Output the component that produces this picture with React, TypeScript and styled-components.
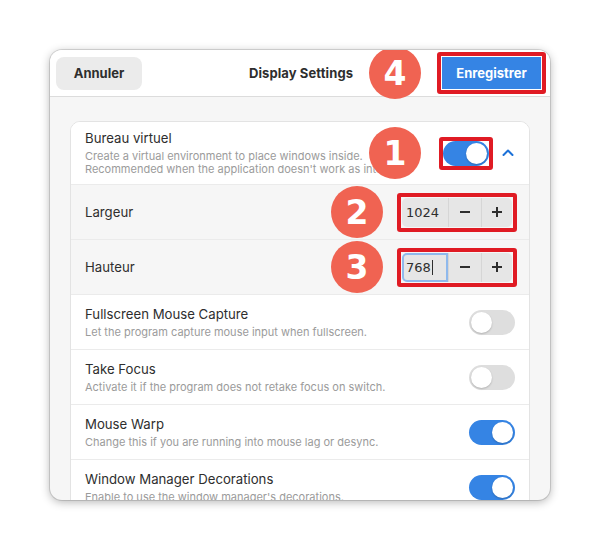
import React from 'react';
import styled, { createGlobalStyle, css } from 'styled-components';

const GlobalStyle = createGlobalStyle`
  html, body {
    margin: 0;
    background: #ffffff;
    font-family: Inter, "Noto Sans", sans-serif;
  }
`;

const Page = styled.div`
  width: 600px;
  height: 550px;
  padding: 50px;
  box-sizing: border-box;
`;

const Window = styled.div`
  width: 500px;
  height: 450px;
  border-radius: 12px;
  overflow: hidden;
  display: flex;
  flex-direction: column;
  background: #f6f6f6;
  box-shadow: 0 0 0 1px rgba(0, 0, 0, 0.12), 0 2px 10px rgba(0, 0, 0, 0.3);
`;

const Header = styled.header`
  height: 46px;
  flex-shrink: 0;
  display: grid;
  grid-template-columns: 1fr auto 1fr;
  align-items: center;
  padding: 0 4px 0 6px;
  background: #ffffff;
  border-bottom: 1px solid #dcdcdc;
`;

const Title = styled.h1`
  margin: 0;
  font-size: 13px;
  font-weight: 700;
  color: #2e2e2e;
  letter-spacing: 0.1px;
`;

const HeaderButton = styled.button<{ $primary?: boolean }>`
  border: none;
  font-family: Inter, sans-serif;
  font-size: 13px;
  font-weight: 700;
  cursor: pointer;
  ${({ $primary }) =>
    $primary
      ? css`
          width: 99px;
          height: 32px;
          background: #3584e4;
          color: #ffffff;
          border-radius: 0;
        `
      : css`
          width: 86px;
          height: 33px;
          background: #ebebeb;
          color: #2e2e2e;
          border-radius: 8px;
        `}
`;

const Start = styled.div`
  justify-self: start;
`;

const End = styled.div`
  justify-self: end;
  display: flex;
`;

const Highlight = styled.div<{ $pad?: number }>`
  position: relative;
  display: inline-flex;
  border: 4px solid #e01b24;
  border-radius: 3px;
  padding: ${({ $pad = 0 }) => $pad}px;
`;

/* gap is measured from the outer edge of the red frame */
const Badge = styled.span<{ $gap: number }>`
  position: absolute;
  right: calc(100% + ${({ $gap }) => $gap + 4}px);
  top: 50%;
  transform: translateY(-50%);
  width: 52px;
  height: 52px;
  border-radius: 50%;
  background: #f06352;
  color: #ffffff;
  display: flex;
  align-items: center;
  justify-content: center;
  font-family: "DejaVu Sans", sans-serif;
  font-weight: 700;
  font-size: 33px;
  pointer-events: none;
`;

const Content = styled.main`
  flex: 1;
  overflow: hidden;
  padding: 24px 20px;
`;

const Card = styled.section`
  background: #ffffff;
  border: 1px solid #e3e3e3;
  border-radius: 10px;
  overflow: hidden;
`;

const Row = styled.div<{ $nested?: boolean; $tall?: boolean }>`
  display: flex;
  align-items: center;
  justify-content: space-between;
  height: ${({ $tall }) => ($tall ? 62 : 54)}px;
  padding: 0 14px;
  border-top: 1px solid #ebebeb;
  background: ${({ $nested }) => ($nested ? '#f6f6f6' : '#ffffff')};

  &:first-child {
    border-top: none;
  }
`;

const SpinRow = styled(Row)`
  padding-right: 12px;
`;

const Texts = styled.div`
  display: flex;
  flex-direction: column;
  gap: 3px;
  min-width: 0;
`;

const RowTitle = styled.div`
  font-size: 13.2px;
  color: #2e2e2e;
  line-height: 17px;
`;

const RowSubtitle = styled.div`
  font-size: 11px;
  color: #9b9b9b;
  line-height: 13px;
  white-space: nowrap;
`;

const Suffix = styled.div`
  display: flex;
  align-items: center;
  gap: 8px;
  flex-shrink: 0;
`;

const Track = styled.div<{ $on: boolean }>`
  position: relative;
  width: 46px;
  height: 25px;
  border-radius: 13px;
  background: ${({ $on }) => ($on ? '#3584e4' : '#dedede')};
  flex-shrink: 0;
`;

const Knob = styled.span<{ $on: boolean }>`
  position: absolute;
  top: 2px;
  left: ${({ $on }) => ($on ? 23 : 2)}px;
  width: 21px;
  height: 21px;
  border-radius: 50%;
  background: #ffffff;
  box-shadow: 0 1px 2px rgba(0, 0, 0, 0.2);
`;

const Spin = styled.div`
  display: flex;
  width: 110px;
  height: 29px;
  background: #e6e6e6;
  border-radius: 5px;
`;

const SpinEntry = styled.div<{ $focused?: boolean }>`
  width: 46px;
  box-sizing: border-box;
  display: flex;
  align-items: center;
  padding-left: 4px;
  font-family: "DejaVu Sans", sans-serif;
  font-size: 13px;
  color: #2e2e2e;
  border-radius: 5px 0 0 5px;
  ${({ $focused }) =>
    $focused &&
    css`
      box-shadow: inset 0 0 0 2px #8fb9ec;
    `}
`;

const Caret = styled.span`
  display: inline-block;
  width: 1px;
  height: 15px;
  margin-left: 1px;
  background: #2e2e2e;
`;

const SpinButton = styled.button<{ $last?: boolean }>`
  width: ${({ $last }) => ($last ? 31 : 33)}px;
  border: none;
  border-left: 1px solid #d6d6d6;
  background: transparent;
  display: flex;
  align-items: center;
  justify-content: center;
  padding: 0;
  color: #2e2e2e;
`;

const Chevron = () => (
  <svg width="14" height="14" viewBox="0 0 14 14" fill="none">
    <path d="M2.5 9 L7 4.5 L11.5 9" stroke="#1c71d8" strokeWidth="2" strokeLinecap="round" strokeLinejoin="round" />
  </svg>
);

const Minus = () => (
  <svg width="12" height="12" viewBox="0 0 12 12">
    <path d="M1 6 H11" stroke="currentColor" strokeWidth="2" />
  </svg>
);

const Plus = () => (
  <svg width="12" height="12" viewBox="0 0 12 12">
    <path d="M1 6 H11 M6 1 V11" stroke="currentColor" strokeWidth="2" />
  </svg>
);

const Toggle = ({ on }: { on: boolean }) => (
  <Track $on={on}>
    <Knob $on={on} />
  </Track>
);

const SpinButtonGroup = ({ value, focused }: { value: string; focused?: boolean }) => (
  <Spin>
    <SpinEntry $focused={focused}>
      {value}
      {focused && <Caret />}
    </SpinEntry>
    <SpinButton>
      <Minus />
    </SpinButton>
    <SpinButton $last>
      <Plus />
    </SpinButton>
  </Spin>
);

const options = [
  { title: 'Fullscreen Mouse Capture', subtitle: 'Let the program capture mouse input when fullscreen.', on: false },
  { title: 'Take Focus', subtitle: 'Activate it if the program does not retake focus on switch.', on: false },
  { title: 'Mouse Warp', subtitle: 'Change this if you are running into mouse lag or desync.', on: true },
  { title: 'Window Manager Decorations', subtitle: "Enable to use the window manager's decorations.", on: true },
];

export default function App() {
  return (
    <Page>
      <GlobalStyle />
      <Window>
        <Header>
          <Start>
            <HeaderButton>Annuler</HeaderButton>
          </Start>
          <Title>Display Settings</Title>
          <End>
            <Highlight $pad={1}>
              <Badge $gap={16}>4</Badge>
              <HeaderButton $primary>Enregistrer</HeaderButton>
            </Highlight>
          </End>
        </Header>
        <Content>
          <Card>
            <Row $tall>
              <Texts>
                <RowTitle>Bureau virtuel</RowTitle>
                <RowSubtitle>
                  Create a virtual environment to place windows inside.
                  <br />
                  Recommended when the application doesn't work as intended.
                </RowSubtitle>
              </Texts>
              <Suffix>
                <Highlight>
                  <Badge $gap={18}>1</Badge>
                  <Toggle on />
                </Highlight>
                <Chevron />
              </Suffix>
            </Row>
            <SpinRow $nested>
              <RowTitle>Largeur</RowTitle>
              <Highlight $pad={1}>
                <Badge $gap={14}>2</Badge>
                <SpinButtonGroup value="1024" />
              </Highlight>
            </SpinRow>
            <SpinRow $nested>
              <RowTitle>Hauteur</RowTitle>
              <Highlight $pad={1}>
                <Badge $gap={14}>3</Badge>
                <SpinButtonGroup value="768" focused />
              </Highlight>
            </SpinRow>
            {options.map((o) => (
              <Row key={o.title}>
                <Texts>
                  <RowTitle>{o.title}</RowTitle>
                  <RowSubtitle>{o.subtitle}</RowSubtitle>
                </Texts>
                <Toggle on={o.on} />
              </Row>
            ))}
          </Card>
        </Content>
      </Window>
    </Page>
  );
}
